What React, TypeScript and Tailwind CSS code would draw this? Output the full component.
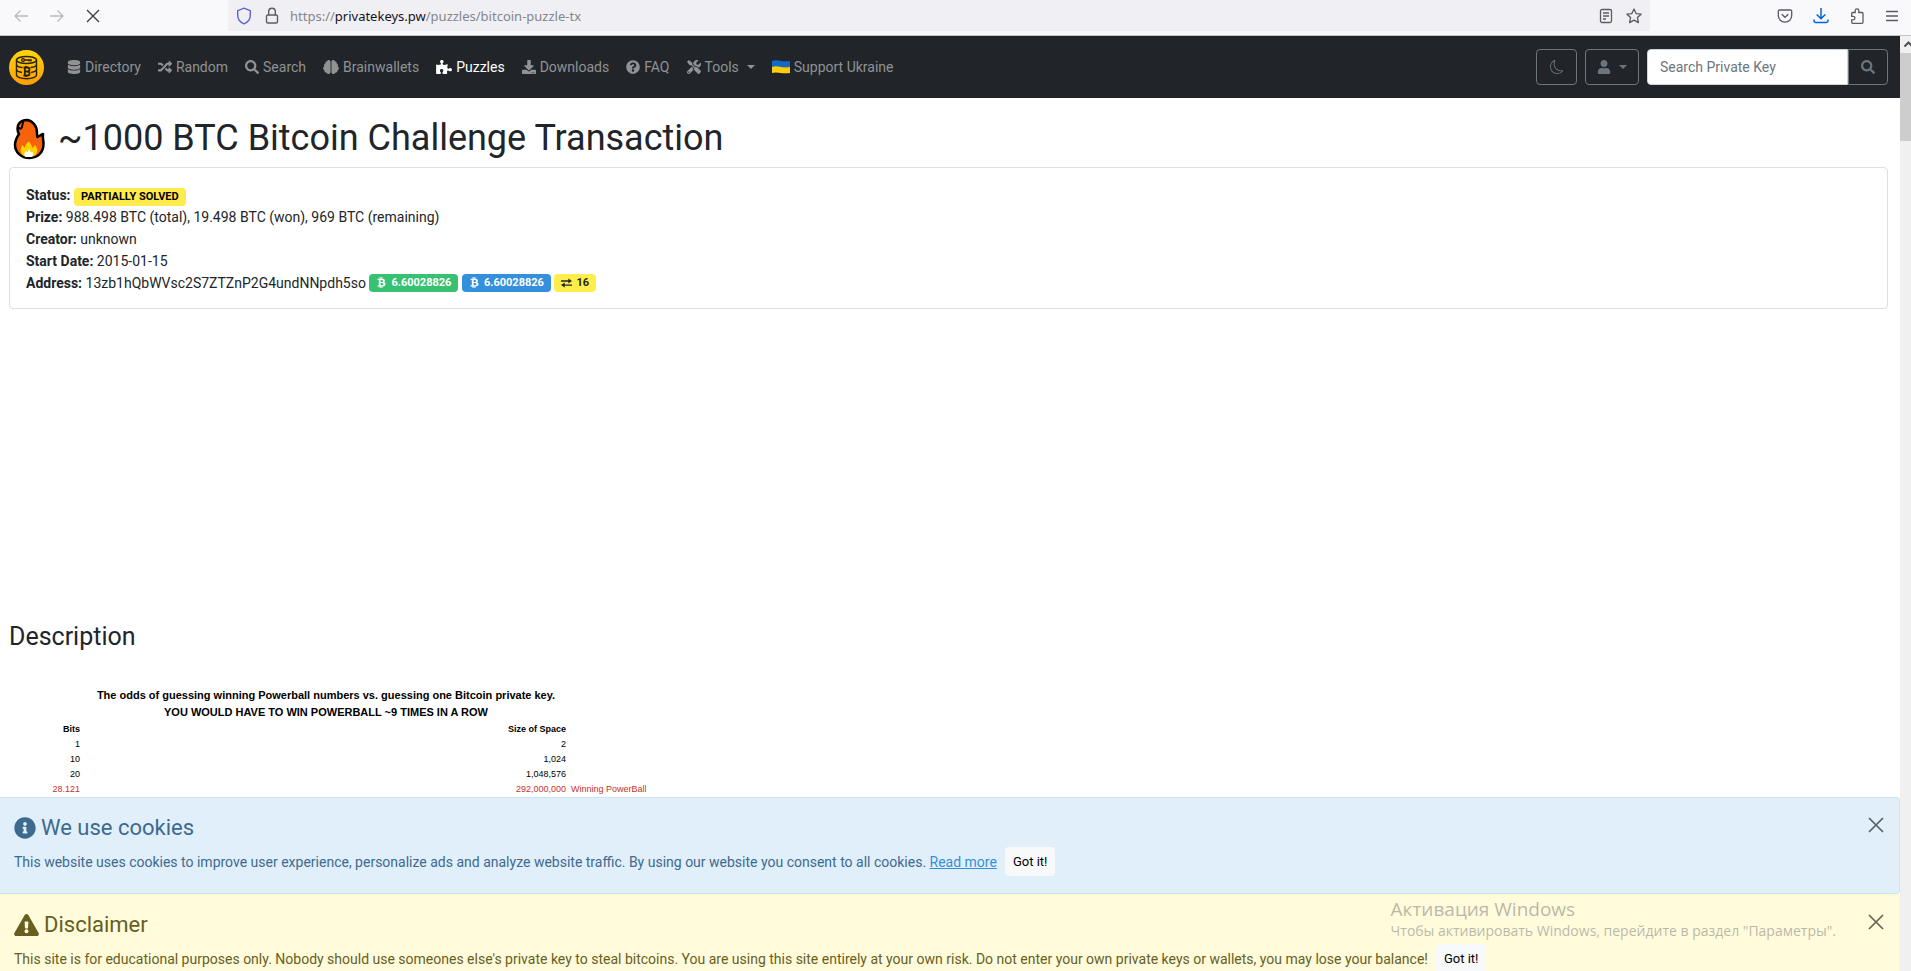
import type { ReactNode } from "react";
import {
  FaDatabase,
  FaRandom,
  FaSearch,
  FaBrain,
  FaPuzzlePiece,
  FaDownload,
  FaQuestionCircle,
  FaTools,
  FaUser,
  FaInfoCircle,
  FaExclamationTriangle,
  FaBtc,
} from "react-icons/fa";
import { BsMoon } from "react-icons/bs";

const rows = [
  { bits: "1", size: "2", note: "", color: "text-black" },
  { bits: "10", size: "1,024", note: "", color: "text-black" },
  { bits: "20", size: "1,048,576", note: "", color: "text-black" },
  { bits: "28.121", size: "292,000,000", note: "Winning PowerBall", color: "text-[#c9302c]" },
];

function Caret() {
  return (
    <svg width="8" height="4" viewBox="0 0 8 4" fill="currentColor" className="ml-1">
      <path d="M0 0h8L4 4z" />
    </svg>
  );
}

function BrowserBar() {
  return (
    <div className="flex h-9 items-center border-b border-[#c4c4c8] bg-[#f9f9fb] pb-1 text-[#5b5b66]">
      <div className="flex w-[228px] shrink-0 items-center gap-5 pl-[13px]">
        <button aria-label="Back" className="text-[#b9b9bf]">
          <svg width="16" height="16" viewBox="0 0 16 16" fill="none" stroke="currentColor" strokeWidth="1.3">
            <path d="M15 8H2M7.500 2.500L2 8l5.500 5.500" />
          </svg>
        </button>
        <button aria-label="Forward" className="text-[#b9b9bf]">
          <svg width="16" height="16" viewBox="0 0 16 16" fill="none" stroke="currentColor" strokeWidth="1.3">
            <path d="M1 8h13M8.500 2.500L14 8l-5.500 5.500" />
          </svg>
        </button>
        <button aria-label="Stop">
          <svg width="16" height="16" viewBox="0 0 16 16" fill="none" stroke="#3f3f46" strokeWidth="1.4">
            <path d="M2 2l12 12M14 2L2 14" />
          </svg>
        </button>
      </div>
      <div className="flex h-full flex-1 items-center bg-[#f0f0f4] pl-2">
        <svg width="16" height="18" viewBox="0 0 16 18" fill="none" stroke="#5b62d0" strokeWidth="1.4">
          <path d="M8 1.200l6.300 2.500v4.500c0 4-2.500 7-6.300 8.600-3.800-1.600-6.300-4.600-6.300-8.600V3.700z" />
        </svg>
        <svg width="16" height="18" viewBox="0 0 16 18" fill="none" stroke="currentColor" strokeWidth="1.4" className="ml-3">
          <path d="M4.700 8V4.500a3.300 3.300 0 0 1 6.600 0V8" />
          <rect x="2.500" y="8" width="11" height="8" rx="1.500" />
        </svg>
        <p className="ml-[10px] font-['Noto_Sans',sans-serif] text-[13px] text-[#85858d]">
          https://<span className="text-[#15141a]">privatekeys.pw</span>/puzzles/bitcoin-puzzle-tx
        </p>
        <div className="mr-2 ml-auto flex gap-3">
          <button aria-label="Reader view">
            <svg width="16" height="16" viewBox="0 0 16 16" fill="none" stroke="currentColor" strokeWidth="1.3">
              <rect x="2.500" y="1.500" width="11" height="13" rx="1.500" />
              <path d="M5 5h6M5 8h6M5 11h3" />
            </svg>
          </button>
          <button aria-label="Bookmark">
            <svg width="16" height="16" viewBox="0 0 16 16" fill="none" stroke="currentColor" strokeWidth="1.3" strokeLinejoin="round">
              <path d="M8 1l2.100 4.600 5 .6-3.700 3.400 1 5L8 12.100l-4.400 2.500 1-5L.9 6.200l5-.6z" />
            </svg>
          </button>
        </div>
      </div>
      <div className="flex w-[261px] shrink-0 items-center justify-end gap-5 pr-3">
        <button aria-label="Pocket">
          <svg width="16" height="16" viewBox="0 0 16 16" fill="none" stroke="currentColor" strokeWidth="1.3">
            <path d="M2.500 2h11a1.200 1.200 0 0 1 1.200 1.200v4.300a6.700 6.700 0 0 1-13.400 0V3.200A1.200 1.200 0 0 1 2.500 2z" />
            <path d="M4.700 6.200L8 9.300l3.300-3.100" />
          </svg>
        </button>
        <button aria-label="Downloads" className="text-[#0061e0]">
          <svg width="16" height="16" viewBox="0 0 16 16" fill="none" stroke="currentColor" strokeWidth="1.5">
            <path d="M8 0v10.500M3.700 6.500L8 10.800l4.300-4.300M1 11.500v1.300A1.700 1.700 0 0 0 2.700 14.500h10.600a1.700 1.700 0 0 0 1.700-1.700v-1.300" />
          </svg>
        </button>
        <button aria-label="Extensions">
          <svg width="16" height="16" viewBox="0 0 16 16" fill="none" stroke="currentColor" strokeWidth="1.3">
            <path d="M2.700 5.500a1 1 0 0 1 1-1h2.500V2.600a1.800 1.800 0 0 1 3.600 0v1.900H13a1 1 0 0 1 1 1v8.800a1 1 0 0 1-1 1H3.700a1 1 0 0 1-1-1v-2.500h1.500a1.700 1.700 0 0 0 0-3.500H2.700z" />
          </svg>
        </button>
        <button aria-label="Menu">
          <svg width="14" height="16" viewBox="0 0 14 16" fill="none" stroke="currentColor" strokeWidth="1.4">
            <path d="M1 3.500h12M1 8h12M1 12.500h12" />
          </svg>
        </button>
      </div>
    </div>
  );
}

function Logo() {
  return (
    <svg width="35" height="35" viewBox="0 0 35 35" fill="none">
      <defs>
        <linearGradient id="coin" x1="0" y1="0" x2="0" y2="1">
          <stop offset="0" stopColor="#ffd60a" />
          <stop offset="1" stopColor="#ff9d0a" />
        </linearGradient>
      </defs>
      <circle cx="17.500" cy="17.500" r="17.500" fill="url(#coin)" />
      <g stroke="#2a2103" strokeWidth="1.4">
        <ellipse cx="17.500" cy="10" rx="10" ry="3.500" />
        <path d="M7.500 10v15c0 2 4.500 3.700 10 3.700s10-1.700 10-3.700V10" />
        <path d="M7.500 14.500c0 1.500 3 2.700 6 3M27.500 14.500c0 1.500-3 2.700-6 3M7.500 19.500c0 1.500 2.500 2.500 5.500 3M27.500 19.500c0 1.500-2.500 2.500-5.500 3" />
        <circle cx="14" cy="10" r="1.400" />
        <path d="M15.500 10h6.500v1.500M20 10v1.500" />
        <path d="M15.800 17.500v8M14.500 17.500h4a2 2 0 0 1 0 4h-2.500M18.500 21.500a2 2 0 0 1 0 4h-4M17 16v1.500M17 25.500V27" strokeWidth="1.8" />
      </g>
    </svg>
  );
}

function Flame() {
  return (
    <svg width="34" height="42" viewBox="0 0 34 42" strokeLinejoin="round">
      <path
        d="M15 2C21 3 25 8 25 15c0 1.500 0 3 .5 4 1.500-.5 3-2 5.500-3-.5 4 .5 6 .5 10C31.500 34 26 40 17.500 40S3 34 3 27c0-5 2-8 4-11C5 13 5 8 7 5.500 9 3 12 2 15 2z"
        fill="#f7630c"
        stroke="#000"
        strokeWidth="2.500"
      />
      <path d="M11.500 3.500C10 5 11 8 9.500 10 8.500 11.500 7 10.500 7 9" fill="none" stroke="#000" strokeWidth="2" />
      <path d="M13 38.500C8 36.500 7.500 31 10.500 27c1 1 1.500 2 2 3 .5-3 2.500-5 4-6.500 2.500 2 3 4 4 6.500l2.500-3c4 5 2.500 10-2.500 11.500z" fill="#ffd000" />
      <path d="M13.500 39c-2-2-1.500-4 .5-6l1.500 1.500L17 31l2 3.500 1-1c2 2 1.500 4-.5 5.500z" fill="#fff" />
    </svg>
  );
}

function UkraineFlag() {
  return (
    <svg width="18" height="14" viewBox="0 0 18 14">
      <path d="M0 1c3-1.200 6-.5 9 0s6 .3 9 0v6H0z" fill="#1469c7" />
      <path d="M0 7c3-1.200 6-.5 9 0s6 .3 9 0v6c-3 .3-6 .5-9 0s-6-1-9 0z" fill="#fccf0b" />
    </svg>
  );
}

function NavLink({ icon, active, children }: { icon: ReactNode; active?: boolean; children: ReactNode }) {
  return (
    <a href="#" className={active ? "flex items-center gap-1 text-white" : "flex items-center gap-1 text-[#909294]"}>
      {icon}
      {children}
    </a>
  );
}

function Navbar() {
  return (
    <nav className="flex h-[62px] items-center bg-[#212529] pr-3 pl-[9px]">
      <a href="#" aria-label="Home">
        <Logo />
      </a>
      <div className="ml-[23px] flex items-center gap-[17px]">
        <NavLink icon={<FaDatabase />}>Directory</NavLink>
        <NavLink icon={<FaRandom />}>Random</NavLink>
        <NavLink icon={<FaSearch />}>Search</NavLink>
        <NavLink icon={<FaBrain className="w-4" />}>Brainwallets</NavLink>
        <NavLink icon={<FaPuzzlePiece className="w-4" />} active>Puzzles</NavLink>
        <NavLink icon={<FaDownload />}>Downloads</NavLink>
        <NavLink icon={<FaQuestionCircle />}>FAQ</NavLink>
        <NavLink icon={<FaTools />}>
          Tools
          <Caret />
        </NavLink>
        <NavLink icon={<UkraineFlag />}>Support Ukraine</NavLink>
      </div>
      <div className="ml-auto flex h-9 gap-2 text-[#6c757d]">
        <button aria-label="Dark mode" className="flex w-[41px] items-center justify-center rounded border border-[#6c757d]">
          <BsMoon />
        </button>
        <button aria-label="Account" className="flex w-[54px] items-center justify-center gap-1 rounded border border-[#6c757d]">
          <FaUser />
          <Caret />
        </button>
        <form className="flex">
          <input
            aria-label="Search Private Key"
            placeholder="Search Private Key"
            className="w-[201px] rounded-l border border-[#ced4da] bg-white px-3 placeholder:text-[#6c757d]"
          />
          <button aria-label="Search" className="flex w-10 items-center justify-center rounded-r border border-[#6c757d]">
            <FaSearch />
          </button>
        </form>
      </div>
    </nav>
  );
}

function Badge({ color, children }: { color: string; children: ReactNode }) {
  return (
    <span className={"inline-flex h-[18px] items-center gap-1 rounded px-[7px] text-[11px] font-bold " + color}>
      {children}
    </span>
  );
}

function ExchangeIcon() {
  return (
    <svg width="11" height="10" viewBox="0 0 12 10" fill="currentColor">
      <path d="M0 2h8V0l4 2.800L8 5.500V3.500H0zM12 8H4v2L0 7.200l4-2.700v2h8z" />
    </svg>
  );
}

function CloseButton() {
  return (
    <button aria-label="Close" className="mt-[3px] self-start opacity-60">
      <svg width="16" height="16" viewBox="0 0 16 16" stroke="#000" strokeWidth="1.7">
        <path d="M1 1l14 14M15 1L1 15" />
      </svg>
    </button>
  );
}

function Notice({ color, icon, title, children }: { color: string; icon: ReactNode; title: string; children: ReactNode }) {
  return (
    <div className={"flex h-[97px] justify-between rounded-r border-y border-r pt-4 pr-[15px] pl-[14px] " + color}>
      <div>
        <h4 className="mb-[5px] flex items-center gap-[5px] text-[22px] leading-7">
          {icon}
          {title}
        </h4>
        <p className="flex items-center">
          {children}
          <button className="ml-2 h-[29px] rounded-sm bg-[#f8f9fa] px-2 text-[13px] text-black">Got it!</button>
        </p>
      </div>
      <CloseButton />
    </div>
  );
}

export default function App() {
  return (
    <div className="flex h-screen flex-col overflow-hidden bg-white font-[Roboto,sans-serif] text-[14px] leading-[22px] text-[#212529]">
      <BrowserBar />
      <div className="flex min-h-0 flex-1">
        <div className="relative min-w-0 flex-1 overflow-hidden">
          <Navbar />
          <main className="pr-3 pl-[9px]">
            <h1 className="mt-[18px] mb-[6px] flex items-center gap-3 pl-[3px] text-[36px] leading-[45px]">
              <Flame />
              ~1000 BTC Bitcoin Challenge Transaction
            </h1>
            <div className="rounded border border-[#dfdfdf] px-4 pt-4 pb-[14px]">
              <p>
                <b>Status:</b> <Badge color="bg-[#ffeb4b] text-black">PARTIALLY SOLVED</Badge>
              </p>
              <p>
                <b>Prize:</b> 988.498 BTC (total), 19.498 BTC (won), 969 BTC (remaining)
              </p>
              <p>
                <b>Creator:</b> unknown
              </p>
              <p>
                <b>Start Date:</b> 2015-01-15
              </p>
              <p>
                <b>Address:</b> 13zb1hQbWVsc2S7ZTZnP2G4undNNpdh5so{" "}
                <Badge color="bg-[#38c172] text-white"><FaBtc />6.60028826</Badge>{" "}
                <Badge color="bg-[#3490dc] text-white"><FaBtc />6.60028826</Badge>{" "}
                <Badge color="bg-[#ffed4a] text-[#212529]"><ExchangeIcon />16</Badge>
              </p>
            </div>
            <h3 className="mt-[313px] text-[25px] leading-[30px]">Description</h3>
            <div className="mt-[35px] font-['Liberation_Sans',sans-serif] text-black">
              <p className="mb-px w-[634px] text-center text-[11px] leading-[17px] font-bold">
                The odds of guessing winning Powerball numbers vs. guessing one Bitcoin private key.
                <br />
                YOU WOULD HAVE TO WIN POWERBALL ~9 TIMES IN A ROW
              </p>
              <table className="text-right text-[9px] leading-[15px]">
                <thead>
                  <tr>
                    <th className="w-[71px]">Bits</th>
                    <th className="w-[486px]">Size of Space</th>
                    <th />
                  </tr>
                </thead>
                <tbody>
                  {rows.map((row) => (
                    <tr key={row.bits} className={row.color}>
                      <td>{row.bits}</td>
                      <td>{row.size}</td>
                      <td className="pl-[5px]">{row.note}</td>
                    </tr>
                  ))}
                </tbody>
              </table>
            </div>
          </main>
          <div className="absolute inset-x-0 top-[761px]">
            <Notice color="border-[#cce4f4] bg-[#e1effa] text-[#3d6a8f]" icon={<FaInfoCircle />} title="We use cookies">
              This website uses cookies to improve user experience, personalize ads and analyze website traffic. By using our
              website you consent to all cookies.&nbsp;<a href="#" className="text-[#3490dc] underline">Read more</a>
            </Notice>
            <Notice
              color="border-[#fffacc] bg-[#fffbdb] text-[#665f1e]"
              icon={<FaExclamationTriangle className="w-[25px]" />}
              title="Disclaimer"
            >
              This site is for educational purposes only. Nobody should use someones else's private key to steal bitcoins. You
              are using this site entirely at your own risk. Do not enter your own private keys or wallets, you may lose your
              balance!
            </Notice>
          </div>
          <div className="absolute right-16 bottom-[30px] font-['Open_Sans',sans-serif] text-[#8a8a8a]/60">
            <p className="text-[19px] leading-6">Активация Windows</p>
            <p className="text-[14px] leading-5">Чтобы активировать Windows, перейдите в раздел "Параметры".</p>
          </div>
        </div>
        <div className="w-[11px] shrink-0 overflow-hidden bg-[#f0f0f0]">
          <svg width="17" height="17" viewBox="0 0 17 17" fill="none" stroke="#505050" strokeWidth="2">
            <path d="M4.500 10.500l4-4 4 4" />
          </svg>
          <div className="h-[88px] bg-[#cdcdcd]" />
        </div>
      </div>
    </div>
  );
}
